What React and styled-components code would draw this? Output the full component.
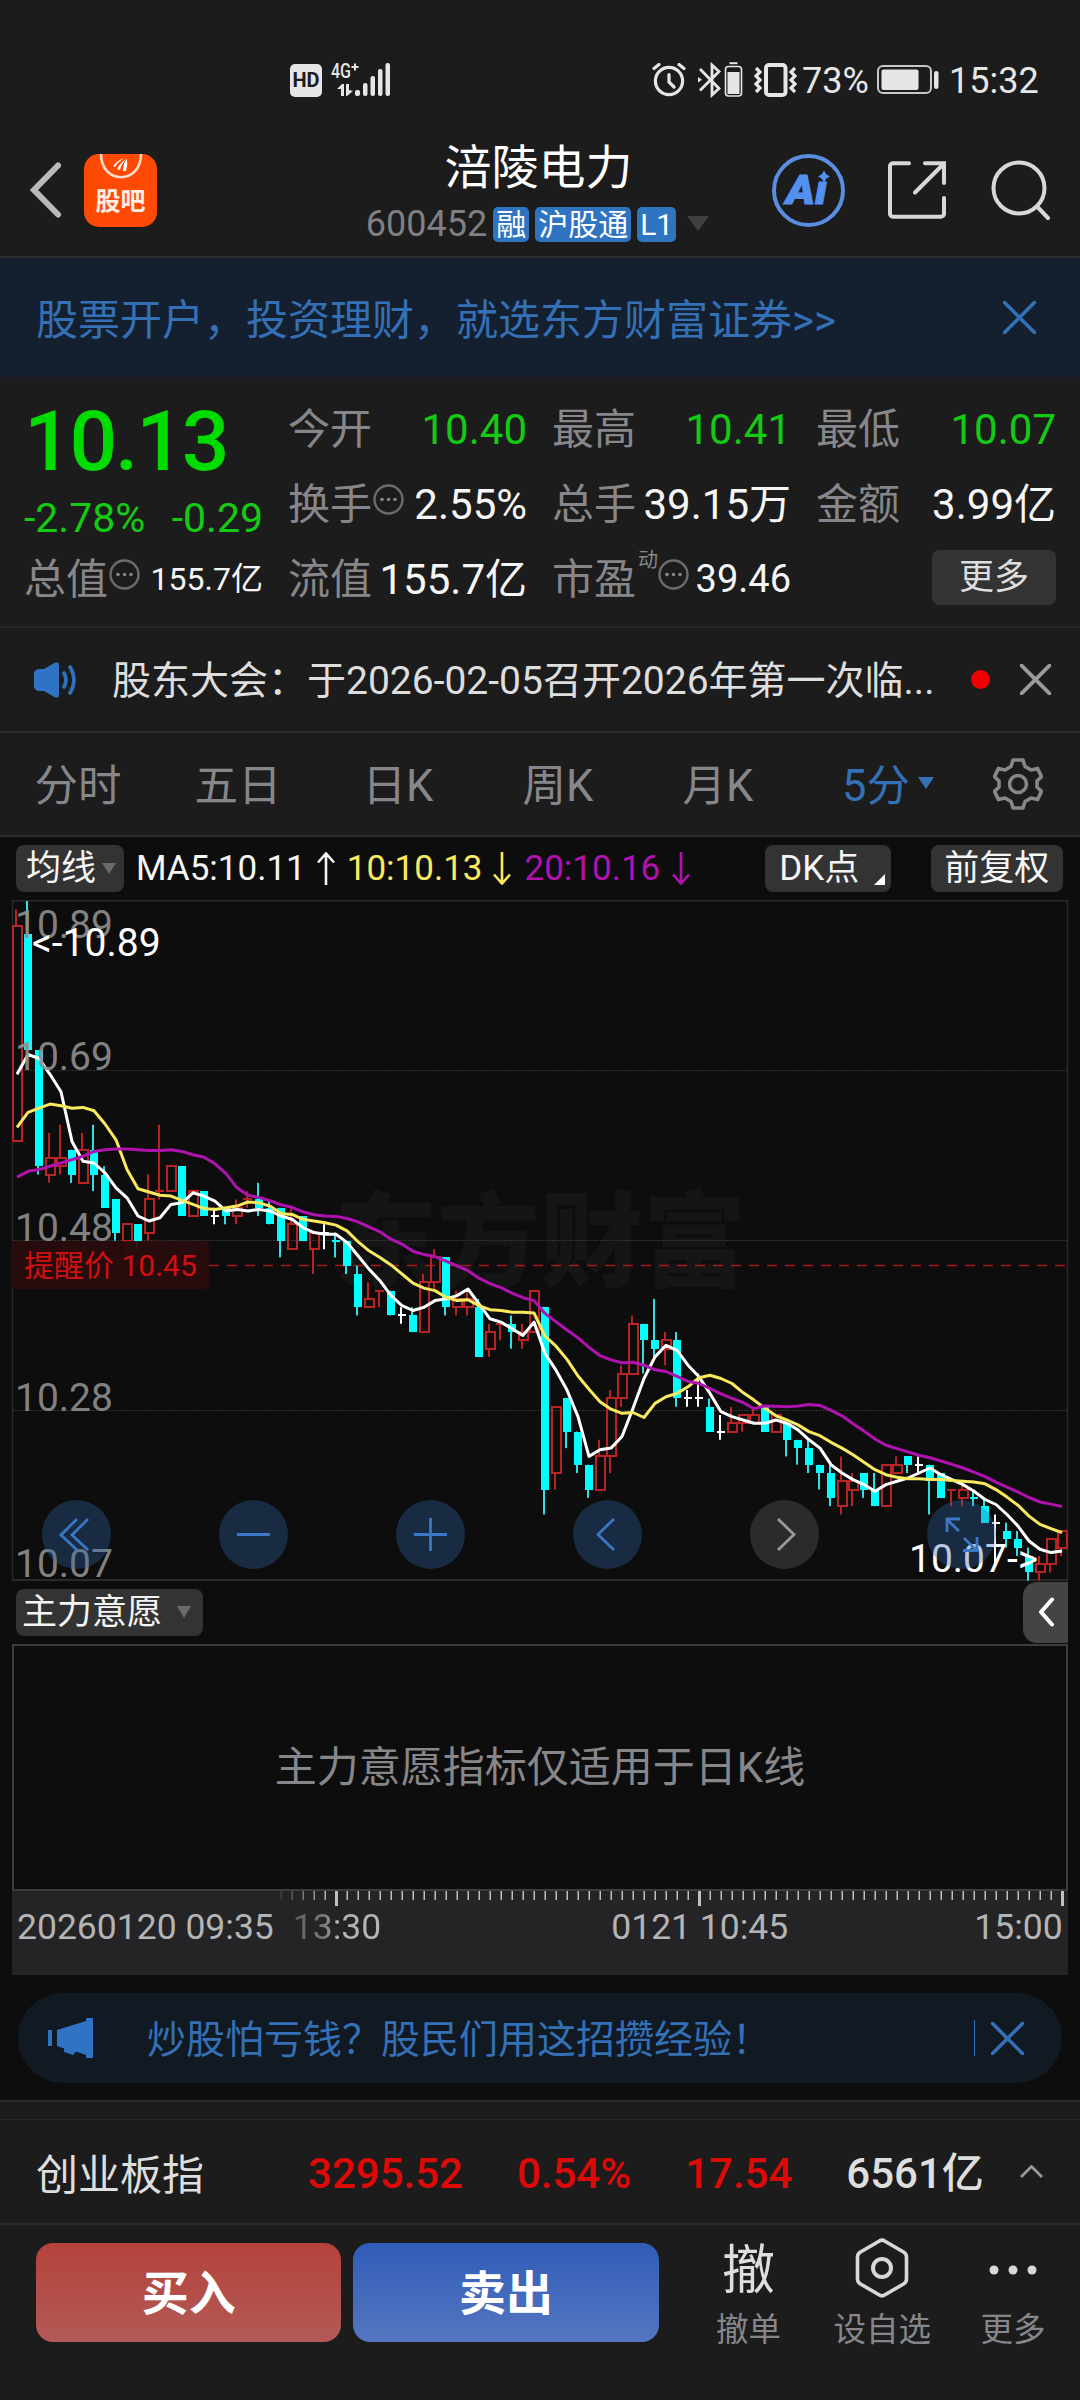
import React from 'react';
import styled, { createGlobalStyle, css } from 'styled-components';

const FONT = "Roboto, 'Noto Sans CJK SC', sans-serif";

const colors = {
  bg: '#1c1c1c',
  chartBg: '#0d0d0d',
  line: '#2c2c2c',
  label: '#87878b',
  text: '#dedede',
  blue: '#3470b6',
  green: '#14cb14',
  red: '#de0a08',
  yellow: '#fbe95e',
  purple: '#b012b0',
  button: '#333333',
};

const GlobalStyle = createGlobalStyle`
  * {
    box-sizing: border-box;
  }

  body {
    margin: 0;
    background: ${colors.bg};
    font-family: ${FONT};
  }

  svg {
    display: block;
    flex: none;
  }
`;

const Screen = styled.div`
  width: 1080px;
  height: 2400px;
  overflow: hidden;
  display: flex;
  flex-direction: column;
  background: ${colors.bg};
  color: ${colors.text};
  white-space: nowrap;

  > * {
    flex: none;
  }
`;

/* ---------- status bar ---------- */

const StatusBar = styled.div`
  height: 120px;
  padding: 63px 43px 0 290px;
  display: flex;
  justify-content: space-between;
  align-items: flex-start;
`;

const StatusGroup = styled.div`
  display: flex;
  align-items: center;
  height: 34px;
`;

const StatusText = styled.span`
  font-size: 36px;
  line-height: 34px;
  color: #e6e6e6;
  width: ${props => props.width}px;
  margin-top: 2px;
`;

const HdBadge = styled.span`
  width: 32px;
  height: 33px;
  margin-right: 9px;
  border-radius: 5px;
  background: #e6e6e6;
  color: ${colors.bg};
  font: 700 20px/32px ${FONT};
  text-align: center;
`;

/* ---------- header ---------- */

const Header = styled.header`
  height: 138px;
  padding: 0 29px 0 29px;
  display: grid;
  grid-template-columns: 1fr auto 1fr;
  border-bottom: 2px solid ${colors.line};
`;

const HeaderSide = styled.div`
  height: 140px;
  display: flex;
  align-items: center;
  justify-content: ${props => (props.end ? 'flex-end' : 'flex-start')};
`;

const ForumLogo = styled.div`
  width: 73px;
  height: 73px;
  margin-left: 22px;
  border-radius: 15px;
  overflow: hidden;
  background: #ff4a05;
  color: #fff0e6;
  text-align: center;
  font: 700 25px/29px ${FONT};
`;

const TitleBlock = styled.div`
  padding-top: 19px;
  display: flex;
  flex-direction: column;
  align-items: center;
  gap: 9px;
`;

const StockName = styled.div`
  margin-right: 3px;
  font-size: 47px;
  line-height: 58px;
  color: #fff;
`;

const CodeRow = styled.div`
  display: flex;
  align-items: center;
  gap: 6px;
  height: 36px;
`;

const StockCode = styled.span`
  font-size: 36px;
  line-height: 36px;
  color: #808084;
`;

const Badge = styled.span`
  height: 35px;
  padding: 0 3px;
  border-radius: 5px;
  background: #2f74c0;
  color: #fff;
  font-size: 30px;
  line-height: 36px;
`;

const Triangle = styled.i`
  width: 0;
  height: 0;
  border-left: ${props => props.size}px solid transparent;
  border-right: ${props => props.size}px solid transparent;
  border-top: ${props => props.depth}px solid ${props => props.color};
`;

const AiBadge = styled.div`
  margin-right: 43px;
`;

/* ---------- banner ---------- */

const Banner = styled.div`
  height: 119px;
  padding: 0 44px 0 36px;
  display: flex;
  align-items: center;
  justify-content: space-between;
  background: #14202f;
  color: ${colors.blue};
  font-size: 42px;
`;

const BannerText = styled.span`
  padding-bottom: 3px;
`;

/* ---------- quote ---------- */

const Quote = styled.section`
  height: 251px;
  padding: 15px 24px 0 24px;
  display: grid;
  grid-template-columns: 239px 239px 239px 240px;
  grid-template-rows: 75px 75px 75px;
  column-gap: 25px;
  border-bottom: 2px solid #262626;
`;

const PriceBlock = styled.div`
  grid-row: span 2;
  display: flex;
  flex-direction: column;
`;

const Price = styled.div`
  font-size: 84px;
  font-weight: 500;
  letter-spacing: -2.2px;
  line-height: 100px;
  color: #00dc00;
`;

const Change = styled.div`
  display: flex;
  justify-content: space-between;
  font-size: 41px;
  line-height: 52px;
  color: ${colors.green};
`;

const Cell = styled.div`
  display: flex;
  align-items: center;
  line-height: 75px;
`;

const CellLabel = styled.span`
  font-size: 42px;
  color: ${colors.label};
`;

const CellValue = styled.span`
  margin-left: auto;
  font-size: ${props => props.size || 42}px;
  color: ${props => (props.green ? colors.green : '#f6f6f6')};
`;

const DynamicMark = styled.sup`
  align-self: flex-start;
  width: 22px;
  margin-left: 2px;
  font-size: 20px;
  line-height: 20px;
  padding-top: 8px;
  color: ${colors.label};
`;

const MoreButton = styled.button`
  margin: -5px 0 0 auto;
  width: 124px;
  height: 55px;
  border: 0;
  border-radius: 7px;
  background: ${colors.button};
  color: ${colors.text};
  font: 35px/55px ${FONT};
  padding: 0;
`;

/* ---------- news ---------- */

const News = styled.div`
  height: 105px;
  padding: 0 29px 0 34px;
  display: flex;
  align-items: center;
  border-bottom: 2px solid ${colors.line};
`;

const NewsText = styled.span`
  margin-left: 32px;
  padding-bottom: 5px;
  font-size: 39px;
  flex: 1;
`;

const Dot = styled.i`
  width: 19px;
  height: 19px;
  margin-right: 30px;
  border-radius: 50%;
  background: #f00000;
`;

/* ---------- period tabs ---------- */

const Tabs = styled.nav`
  height: 104px;
  display: flex;
  align-items: center;
  padding-right: 37px;
  border-bottom: 2px solid ${colors.line};
`;

const Tab = styled.div`
  width: 160px;
  padding: 0 4px 3px 0;
  text-align: center;
  font-size: 43.5px;
  color: ${colors.label};

  ${props => props.active && css`
    display: flex;
    align-items: center;
    gap: 8px;
    width: auto;
    margin-left: 42px;
    margin-right: auto;
    color: ${colors.blue};
  `}
`;

/* ---------- chart ---------- */

const ChartArea = styled.section`
  height: 1263px;
  background: ${colors.chartBg};
`;

const MaRow = styled.div`
  height: 63px;
  padding: 0 16px;
  display: flex;
  align-items: center;
  font-size: 35px;
`;

const ChipButton = styled.button`
  position: relative;
  flex: none;
  width: ${props => props.width}px;
  height: 47px;
  margin-left: ${props => props.left || 0}px;
  padding: 0 0 0 ${props => props.pad}px;
  display: flex;
  align-items: center;
  gap: ${props => props.gap || 0}px;
  border: 0;
  border-radius: 8px;
  background: ${colors.button};
  color: #f5f5f5;
  font: 35px/47px ${FONT};
`;

const CornerMark = styled.i`
  position: absolute;
  right: 6px;
  bottom: 7px;
  border-left: 11px solid transparent;
  border-bottom: 11px solid #fff;
`;

const MaValue = styled.span`
  display: flex;
  align-items: center;
  gap: ${props => props.gap || 10}px;
  margin-left: ${props => props.left}px;
  color: ${props => props.color};
`;

const ChartBox = styled.div`
  position: relative;
  height: 681px;
`;

const ChartButtons = styled.div`
  position: absolute;
  left: 42px;
  top: 600px;
  display: flex;
  gap: 108px;
`;

const RoundButton = styled.button`
  width: 69px;
  height: 69px;
  padding: 0;
  border: 0;
  border-radius: 50%;
  background: ${props => (props.muted ? 'rgba(104, 104, 104, 0.34)' : 'rgba(46, 102, 170, 0.34)')};
`;

const IndicatorRow = styled.div`
  height: 63px;
  padding: 0 12px 1px 16px;
  display: flex;
  align-items: center;
  justify-content: space-between;
`;

const CollapseTab = styled.div`
  width: 45px;
  height: 61px;
  border-radius: 14px 0 0 14px;
  background: #444;
  display: flex;
  align-items: center;
  justify-content: center;
`;

const IndicatorPanel = styled.div`
  height: 247px;
  margin: 0 12px;
  border: 2px solid #3c3c3c;
  text-align: center;
  font-size: 42px;
  line-height: 243px;
  color: ${colors.label};
`;

const Axis = styled.div`
  height: 84px;
  margin: 0 12px;
  background: #242426;
`;

const AxisLabels = styled.div`
  display: flex;
  padding: 0 6px 0 5px;
  font-size: 35.5px;
  line-height: 42px;
  color: #b4b4b4;
`;

const AxisLabel = styled.span`
  margin-left: ${props => props.left || 0}px;
`;

const FadedLabel = styled(AxisLabel)`
  color: transparent;
  background: linear-gradient(90deg, #5c5c5e 0, #7c7c7e 32px, #b4b4b4 46px);
  -webkit-background-clip: text;
  background-clip: text;
`;

const Promo = styled.div`
  height: 90px;
  margin: 18px 18px 0;
  padding: 0 38px 0 30px;
  display: flex;
  align-items: center;
  border-radius: 45px;
  background: #111922;
  color: ${colors.blue};
  font-size: 39px;
`;

const PromoText = styled.span`
  margin-left: 54px;
  padding-bottom: 4px;
  flex: 1;
`;

const PromoDivider = styled.i`
  width: 1px;
  height: 36px;
  margin-right: 16px;
  background: ${colors.blue};
`;

/* ---------- bottom ---------- */

const Strip = styled.div`
  height: 20px;
  border-top: 2px solid ${colors.line};
  border-bottom: 1px solid #262626;
`;

const IndexRow = styled.div`
  height: 105px;
  padding: 0 37px 0 36px;
  display: flex;
  align-items: center;
  border-bottom: 2px solid ${colors.line};
  font-size: 42px;
`;

const IndexValue = styled.span`
  margin-left: ${props => props.left}px;
  padding-top: 5px;
  font-weight: 500;
  line-height: 60px;
  color: ${props => (props.up ? colors.red : colors.text)};
`;

const TradeBar = styled.footer`
  height: 176px;
  padding: 18px 34px 0 36px;
  display: flex;
`;

const TradeButton = styled.button`
  width: 306px;
  height: 99px;
  margin-right: 12px;
  padding: 0;
  border: 0;
  border-radius: 17px;
  color: #fff;
  font: 700 47px/102px ${FONT};
  background: ${props => (props.sell
    ? 'linear-gradient(#2f5cb8, #5576c0)'
    : 'linear-gradient(#b5423b, #b25a56)')};
`;

const Action = styled.div`
  width: ${props => props.width}px;
  margin-left: ${props => props.left}px;
  display: flex;
  flex-direction: column;
  align-items: center;
  font-size: 32.5px;
  line-height: 40px;
  color: ${colors.label};
`;

const ActionIcon = styled.div`
  height: 68px;
  margin-top: -6px;
  margin-bottom: 5px;
  padding-bottom: ${props => props.lift || 0}px;
  display: flex;
  align-items: center;
  font-size: 53px;
  line-height: 68px;
  color: ${colors.text};
`;

/* ---------- icons ---------- */

const CloseIcon = ({ size = 32, color = colors.blue, stroke = 3.5 }) => (
  <svg width={size} height={size} viewBox="0 0 32 32" fill="none" stroke={color} strokeWidth={stroke}>
    <path d="M1 1 31 31M31 1 1 31" strokeLinecap="round" />
  </svg>
);

const InfoDots = ({ left = 0 }) => (
  <svg width="31" height="31" viewBox="0 0 31 31" style={{ marginLeft: left, marginTop: -10 }}>
    <circle cx="15.5" cy="15.5" r="14" fill="none" stroke="#6c6c70" strokeWidth="2.4" />
    <circle cx="9" cy="15.5" r="1.8" fill="#87878b" />
    <circle cx="15.5" cy="15.5" r="1.8" fill="#87878b" />
    <circle cx="22" cy="15.5" r="1.8" fill="#87878b" />
  </svg>
);

const SignalIcon = () => (
  <svg width="60" height="34" viewBox="0 0 60 34" fill="#e6e6e6" overflow="visible">
    <text x="0" y="14.5" fontFamily="Roboto" fontWeight="500" fontSize="20" textLength="20" lengthAdjust="spacingAndGlyphs">4G</text>
    <path d="M20.500 3h2.500v-2.500h2v2.500h2.500v2H25v2.500h-2V5h-2.500z" />
    <path d="M6 26 11 21h2v12h-3v-7zM15 21h3v6l4 1-6 5h-1z" />
    <rect x="24" y="27" width="5" height="6" rx="2" />
    <rect x="32" y="20" width="4.5" height="13" rx="2" />
    <rect x="39.5" y="13" width="4.5" height="20" rx="2" />
    <rect x="47" y="6" width="4.5" height="27" rx="2" />
    <rect x="54.5" y="0" width="4.5" height="33" rx="2" />
  </svg>
);

const AlarmIcon = () => (
  <svg width="34" height="34" viewBox="0 0 34 34" fill="none" stroke="#e6e6e6" strokeWidth="3.2" strokeLinecap="round">
    <circle cx="17" cy="18" r="13.6" />
    <path d="M17 11.5v7.5l5 5M2 5.5 7 1.5M32 5.5 27 1.5" />
  </svg>
);

const BluetoothIcon = () => (
  <svg width="45" height="36" viewBox="0 0 45 36" fill="none" stroke="#e6e6e6" strokeWidth="2.8">
    <path d="M2 7 21 26.5 14 33V3L21 9.5 2 28.5" />
    <path d="M0 15 4 17.8 0 20.6z" fill="#e6e6e6" stroke="none" />
    <rect x="27.5" y="4.5" width="16" height="29.5" rx="3" strokeWidth="1.6" />
    <rect x="29.5" y="10" width="12" height="22" fill="#e6e6e6" stroke="none" />
    <path d="M31.5 1.2h8" strokeWidth="2" />
  </svg>
);

const VibrateIcon = () => (
  <svg width="43" height="34" viewBox="0 0 43 34" fill="none" stroke="#e6e6e6">
    <rect x="12" y="2" width="19.5" height="30" rx="3" strokeWidth="4" />
    <path d="M2 5 6 9 2 13 6 17 2 21 6 25 2 29M41 5 37 9 41 13 37 17 41 21 37 25 41 29" strokeWidth="3.2" />
  </svg>
);

const BatteryIcon = () => (
  <svg width="62" height="30" viewBox="0 0 62 30" fill="none">
    <rect x="1" y="1" width="53" height="27" rx="5" stroke="#c8c8c8" strokeWidth="2" />
    <rect x="4.5" y="4.5" width="37" height="20.5" rx="2" fill="#e6e6e6" />
    <rect x="57" y="6" width="4.5" height="18" rx="2.2" fill="#e6e6e6" />
  </svg>
);

const AiIcon = () => (
  <svg width="73" height="73" viewBox="0 0 73 73">
    <circle cx="36.5" cy="36.5" r="34.5" fill="none" stroke="#5a8ee0" strokeWidth="4" />
    <text x="14" y="50" fill="#5490f0" stroke="#5490f0" strokeWidth="1.200" fontFamily="Roboto" fontWeight="900" fontStyle="italic" fontSize="41" textLength="41" lengthAdjust="spacingAndGlyphs">Aı</text>
    <path d="M52 16.5 54.2 20.3 58 22.5 54.2 24.7 52 28.5 49.8 24.7 46 22.5 49.8 20.3z" fill="#5490f0" />
  </svg>
);

const ShareIcon = () => (
  <svg width="58" height="58" viewBox="0 0 58 58" fill="none" stroke="#d8d8d8" strokeWidth="4" strokeLinecap="round">
    <path d="M21 2.2H5a3 3 0 0 0-3 3v47.6a3 3 0 0 0 3 3h48a3 3 0 0 0 3-3V37M37 2.2H56V22M55 3.5 27 31.5" />
  </svg>
);

const SearchIcon = () => (
  <svg width="60" height="60" viewBox="0 0 60 60" fill="none" stroke="#d8d8d8" strokeWidth="4" strokeLinecap="round">
    <circle cx="28" cy="28" r="25.5" />
    <path d="M46.5 47 57 58" />
  </svg>
);

const SpeakerIcon = () => (
  <svg width="46" height="36" viewBox="0 0 46 36" fill="#2f74c4">
    <path d="M0 12q0-5 6-5h4L20 1.2q5-3 5 3v27.6q0 6-5 3L10 29H6q-6 0-6-5z" />
    <path d="M30 11q4 7 0 14M36 5q8 13 0 26" fill="none" stroke="#2f74c4" strokeWidth="3.6" strokeLinecap="round" />
  </svg>
);

const GearIcon = () => (
  <svg width="50" height="52" viewBox="0 0 50 52" fill="none" stroke={colors.label} strokeWidth="3.6" strokeLinejoin="round">
    <path d="M20 2h10l2 6.5 6 3.4 6.500-1.5 4 8.2-4.500 4.4v6l4.500 4.4-4 8.2-6.500-1.5-6 3.4-2 6.500H20l-2-6.500-6-3.4-6.500 1.5-4-8.2L6 29v-6l-4.500-4.4 4-8.2 6.500 1.5 6-3.4z" />
    <circle cx="25" cy="26" r="8.5" />
  </svg>
);

const ArrowIcon = ({ down }) => (
  <svg width="18" height="33" viewBox="0 0 18 33" fill="none" stroke="currentColor" strokeWidth="2.6">
    <path d={down ? 'M9 0v31M1 22.5 9 31.5 17 22.5' : 'M9 33V2M1 10.5 9 1.5 17 10.5'} />
  </svg>
);

const MegaphoneIcon = () => (
  <svg width="45" height="40" viewBox="0 0 45 40" fill="#2f74c4">
    <rect x="0" y="12" width="4" height="16" />
    <path d="M9 12 38 3V0h7v40h-7v-3l-10-3.5-3 3.5-9-3v-3.5L9 28z" />
  </svg>
);

const HexIcon = () => (
  <svg width="54" height="60" viewBox="0 0 54 60" fill="none" stroke="#d8d8d8" strokeWidth="3.6" strokeLinejoin="round">
    <path d="M24 3.2q3-2 6 0L48.5 14q3 1.8 3 5v22q0 3.2-3 5L30 56.8q-3 2-6 0L5.500 46q-3-1.8-3-5V19q0-3.2 3-5z" />
    <circle cx="27" cy="30" r="9" strokeWidth="4" />
  </svg>
);

const glyphs = {
  rewind: 'M35 19 19 35 35 50M46 19 30 35 46 50',
  minus: 'M18 34.5H51',
  plus: 'M18 34.5H51M34.5 18V51',
  prev: 'M41 19 25 34.5 41 50',
  next: 'M28 19 44 34.5 28 50',
  expand: 'M32 31 20 19.5M33 19H20V32M37 38 49 50M36 50.5H50V37',
};

/* ---------- chart data ---------- */

// Each candle: [kind, high, bodyTop, bodyBottom, low], in cents below 10.89.
// u = closed up, d = closed down, f = flat
const candles = [
  ['u', 1, 3, 29, 29], ['d', 0, 4, 18, 18], ['d', 18, 18, 32, 33], ['u', 28, 31, 33, 34],
  ['u', 27, 31, 32, 33], ['d', 30, 30, 33, 34], ['u', 28, 30, 34, 34], ['d', 27, 30, 33, 35],
  ['d', 32, 33, 37, 37], ['d', 36, 36, 40, 41], ['u', 39, 39, 41, 43], ['d', 39, 39, 41, 42],
  ['u', 33, 36, 40, 41], ['u', 27, 35, 35, 36], ['u', 32, 32, 35, 35], ['d', 32, 32, 38, 38],
  ['u', 35, 35, 38, 38], ['d', 35, 35, 38, 38], ['f', 37, 38, 38, 39], ['d', 37, 37, 38, 39],
  ['u', 36, 37, 38, 39], ['u', 35, 36, 36, 37], ['d', 34, 36, 37, 38], ['d', 36, 37, 39, 39],
  ['d', 37, 37, 41, 43], ['u', 37, 39, 42, 42], ['d', 38, 38, 41, 41], ['u', 40, 40, 42, 45],
  ['f', 39, 40, 40, 42], ['d', 40, 41, 41, 43], ['d', 41, 41, 44, 45], ['d', 44, 45, 49, 50],
  ['u', 46, 48, 49, 49], ['u', 47, 47, 47, 49], ['d', 47, 47, 50, 50], ['f', 49, 50, 50, 51],
  ['d', 49, 50, 52, 52], ['u', 45, 46, 52, 52], ['u', 42, 43, 46, 47], ['d', 43, 43, 49, 50],
  ['u', 47, 48, 49, 50], ['u', 47, 48, 49, 50], ['d', 48, 49, 55, 55], ['u', 51, 52, 54, 55],
  ['u', 51, 51, 51, 53], ['d', 50, 51, 52, 54], ['u', 51, 52, 53, 54], ['u', 47, 47, 52, 52],
  ['d', 49, 49, 71, 74], ['u', 61, 61, 69, 71], ['d', 60, 60, 64, 66], ['d', 64, 64, 68, 69],
  ['d', 68, 68, 71, 72], ['u', 65, 67, 71, 71], ['u', 59, 60, 67, 69], ['u', 56, 57, 60, 61],
  ['u', 50, 51, 57, 57], ['d', 51, 51, 53, 57], ['d', 48, 53, 54, 55], ['u', 52, 53, 54, 56],
  ['d', 52, 53, 60, 61], ['f', 59, 60, 60, 61], ['f', 57, 60, 60, 61], ['d', 60, 61, 64, 64],
  ['f', 62, 64, 64, 65], ['u', 61, 63, 64, 64], ['u', 62, 62, 63, 64], ['u', 61, 62, 63, 63],
  ['d', 61, 61, 64, 64], ['u', 62, 62, 64, 64], ['d', 63, 63, 65, 67], ['d', 65, 65, 66, 68],
  ['d', 65, 66, 68, 69], ['d', 68, 68, 69, 71], ['d', 68, 69, 72, 73], ['u', 67, 70, 73, 74],
  ['u', 69, 70, 71, 73], ['d', 69, 69, 71, 72], ['d', 69, 71, 73, 73], ['u', 68, 68, 73, 73],
  ['u', 67, 68, 69, 69], ['d', 67, 67, 68, 69], ['f', 67, 68, 68, 69], ['d', 68, 68, 70, 74],
  ['d', 69, 69, 72, 72], ['u', 71, 71, 71, 73], ['u', 70, 71, 72, 73], ['d', 71, 72, 72, 73],
  ['d', 72, 73, 75, 75], ['f', 74, 75, 75, 80], ['d', 75, 76, 77, 78], ['d', 76, 77, 78, 79],
  ['d', 78, 79, 81, 82], ['u', 79, 80, 81, 82], ['u', 77, 77, 80, 81], ['u', 76, 76, 78, 79],
];

// Averages for the first bars, whose history is off screen
const seeds = {
  5: [20.9, 18.5, 19, 20.9],
  10: [27.3, 25.5, 25, 24.5, 24.7, 25, 24.9, 25.3, 26.9],
  20: [33.3, 32.6, 32.4, 32, 31.6, 31.2, 30.8, 30.2, 30, 29.9, 29.9, 30, 30.1, 30.1, 30, 30.2, 30.6, 30.9, 31.7],
};

const STEP = 11;
const CENT = 8.29;
const barX = i => 16 + i * STEP;
const priceY = cents => 1 + cents * CENT;

const closes = candles.map(([kind, , top, bottom]) => (kind === 'd' ? bottom : top));

const averagePoints = period =>
  closes
    .map((_, i) => {
      const value = i < period - 1
        ? seeds[period][i]
        : closes.slice(i - period + 1, i + 1).reduce((a, b) => a + b, 0) / period;
      return `${barX(i) + 1},${priceY(value).toFixed(1)}`;
    })
    .join(' ');

const Candle = ({ index, data }) => {
  const [kind, high, top, bottom, low] = data;
  const x = barX(index);
  const yTop = Math.round(priceY(top));
  const yBottom = Math.round(priceY(bottom));
  const yHigh = priceY(high);
  const yLow = priceY(low);

  if (kind === 'u') {
    return (
      <g fill="none" stroke="#b82424" strokeWidth="2">
        {high < top && <path d={`M${x} ${yHigh}V${yTop}`} />}
        {low > bottom && <path d={`M${x} ${yBottom}V${yLow}`} />}
        {top === bottom
          ? <path d={`M${x - 4} ${yTop}h9`} />
          : <rect x={x - 3} y={yTop} width="9" height={yBottom - yTop} />}
      </g>
    );
  }
  if (kind === 'f') {
    return <path d={`M${x} ${yHigh}V${yLow}M${x - 3} ${yTop}h8`} stroke="#fff" strokeWidth="2" />;
  }
  return (
    <g fill="#00ffff">
      <rect x={x - 1} y={yHigh} width="2" height={yLow - yHigh} fill="#2fdfe4" />
      <rect x={x - 3} y={yTop - (top === bottom ? 1 : 0)} width="8" height={Math.max(yBottom - yTop, 2)} />
    </g>
  );
};

const priceLabels = [
  ['10.89', 38], ['10.69', 170], ['10.48', 341], ['10.28', 511], ['10.07', 677],
];

const CandleChart = () => (
  <svg width="1080" height="681" viewBox="0 0 1080 681" fontFamily={FONT}>
    <text x="334" y="379" fontSize="103" fontWeight="900" fill="#151515">东方财富</text>
    <path d="M12 .5H1068M12 680H1068" stroke="#2a2a2a" strokeWidth="2" />
    <path d="M12.5 0V680M1067.5 0V680" stroke="#2a2a2a" strokeWidth="1.5" />
    {[170, 340, 510].map(y => (
      <path key={y} d={`M12 ${y + 0.5}H1068`} stroke="#333" strokeWidth="1" strokeDasharray="2 1" />
    ))}
    <path d="M209 365.5H1067" stroke="#a81a1a" strokeWidth="1.5" strokeDasharray="10 8" />
    {candles.map((data, i) => <Candle key={i} index={i} data={data} />)}
    <g fill="none" strokeWidth="3" strokeLinejoin="round">
      <polyline points={averagePoints(5)} stroke="#fff" />
      <polyline points={averagePoints(10)} stroke={colors.yellow} />
      <polyline points={averagePoints(20)} stroke={colors.purple} />
    </g>
    <path d="M12 341H205q4 0 4 4V385q0 4-4 4H12z" fill="#2a0b0c" fillOpacity=".92" />
    <text x="24" y="376" fontSize="30" fill="#d01010">提醒价 10.45</text>
    <g fontSize="39" fill="#8e8e8e" fillOpacity=".93">
      {priceLabels.map(([label, y]) => <text key={label} x="15" y={y}>{label}</text>)}
    </g>
    <g fontSize="39" fill="#fff">
      <text x="32" y="56">&lt;-10.89</text>
      <text x="909" y="672">10.07-&gt;</text>
    </g>
  </svg>
);

const AxisTicks = () => (
  <svg width="1056" height="15" viewBox="12 0 1056 15">
    {candles.map((_, i) => {
      if (i < 24) return null;
      const major = i === 29 || i === 62 || i === 95;
      return (
        <rect
          key={i}
          x={barX(i) + (major ? 0 : 0.5)}
          y="0"
          width={major ? 3 : 1.5}
          height={major ? 15 : 9}
          fill="#c0c0c0"
          fillOpacity={Math.min(1, (i - 23) * 0.18)}
        />
      );
    })}
  </svg>
);

const RoundGlyphButton = ({ name, muted }) => (
  <RoundButton muted={muted ? 1 : undefined} aria-label={name}>
    <svg width="69" height="69" viewBox="0 0 69 69" fill="none" stroke={muted ? '#98989c' : '#3a78c4'} strokeWidth="2.8">
      <path d={glyphs[name]} />
    </svg>
  </RoundButton>
);

const App = () => (
  <>
    <GlobalStyle />
    <Screen>
      <StatusBar>
        <StatusGroup>
          <HdBadge>HD</HdBadge>
          <SignalIcon />
        </StatusGroup>
        <StatusGroup>
          <AlarmIcon />
          <svg width="12" height="1" />
          <BluetoothIcon />
          <svg width="11" height="1" />
          <VibrateIcon />
          <svg width="5" height="1" />
          <StatusText width={75}>73%</StatusText>
          <BatteryIcon />
          <svg width="10" height="1" />
          <StatusText width={88}>15:32</StatusText>
        </StatusGroup>
      </StatusBar>

      <Header>
        <HeaderSide>
          <svg width="33" height="56" viewBox="0 0 33 56" fill="none" stroke="#bababa" strokeWidth="6">
            <path d="M29 3.5 5 28 29 52.5" strokeLinecap="round" />
          </svg>
          <ForumLogo>
            <svg width="73" height="33" viewBox="0 0 73 33" fill="none">
              <path d="M17 0C17 31 57 31 57 0" stroke="#ffdccb" strokeWidth="2.6" />
              <path d="M29 12q5-6 11-8-7 5-9 9zM33 15q4-7 9-10-5 6-6 11zM39 17q0-8 4-12 1 6-1 12z" fill="#fff" />
            </svg>
            股吧
          </ForumLogo>
        </HeaderSide>
        <TitleBlock>
          <StockName>涪陵电力</StockName>
          <CodeRow>
            <StockCode>600452</StockCode>
            <Badge>融</Badge>
            <Badge>沪股通</Badge>
            <Badge>L1</Badge>
            <svg width="32" height="16" viewBox="-5 0 32 16"><path d="M0 0H22L11 15z" fill="#404040" /></svg>
          </CodeRow>
        </TitleBlock>
        <HeaderSide end="true">
          <AiBadge><AiIcon /></AiBadge>
          <ShareIcon />
          <svg width="45" height="1" />
          <SearchIcon />
        </HeaderSide>
      </Header>

      <Banner>
        <BannerText>股票开户，投资理财，就选东方财富证券&gt;&gt;</BannerText>
        <CloseIcon size={33} />
      </Banner>

      <Quote>
        <PriceBlock>
          <Price>10.13</Price>
          <Change>
            <span>-2.78%</span>
            <span>-0.29</span>
          </Change>
        </PriceBlock>
        <Cell><CellLabel>今开</CellLabel><CellValue green="true">10.40</CellValue></Cell>
        <Cell><CellLabel>最高</CellLabel><CellValue green="true">10.41</CellValue></Cell>
        <Cell><CellLabel>最低</CellLabel><CellValue green="true">10.07</CellValue></Cell>
        <Cell><CellLabel>换手</CellLabel><InfoDots left={1} /><CellValue>2.55%</CellValue></Cell>
        <Cell><CellLabel>总手</CellLabel><CellValue>39.15万</CellValue></Cell>
        <Cell><CellLabel>金额</CellLabel><CellValue>3.99亿</CellValue></Cell>
        <Cell><CellLabel>总值</CellLabel><InfoDots left={1} /><CellValue size={32}>155.7亿</CellValue></Cell>
        <Cell><CellLabel>流值</CellLabel><CellValue>155.7亿</CellValue></Cell>
        <Cell>
          <CellLabel>市盈</CellLabel>
          <DynamicMark>动</DynamicMark>
          <InfoDots left={-2} />
          <CellValue size={38}>39.46</CellValue>
        </Cell>
        <Cell><MoreButton>更多</MoreButton></Cell>
      </Quote>

      <News>
        <SpeakerIcon />
        <NewsText>股东大会：于2026-02-05召开2026年第一次临...</NewsText>
        <Dot />
        <CloseIcon size={31} color="#9a9a9a" stroke={4} />
      </News>

      <Tabs>
        {['分时', '五日', '日K', '周K', '月K'].map(name => <Tab key={name}>{name}</Tab>)}
        <Tab active="true">5分<Triangle size={8} depth={12} color={colors.blue} /></Tab>
        <GearIcon />
      </Tabs>

      <ChartArea>
        <MaRow>
          <ChipButton width={108} pad={10} gap={6}>均线<Triangle size={7} depth={11} color="#6a6a6a" /></ChipButton>
          <MaValue left={12} color="#f5f5f5" gap={11}>MA5:10.11<ArrowIcon /></MaValue>
          <MaValue left={12} color={colors.yellow}>10:10.13<ArrowIcon down /></MaValue>
          <MaValue left={14} color={colors.purple} gap={12}>20:10.16<ArrowIcon down /></MaValue>
          <ChipButton width={126} pad={14} left={75}>DK点<CornerMark /></ChipButton>
          <ChipButton width={132} pad={13} left={40}>前复权</ChipButton>
        </MaRow>
        <ChartBox>
          <CandleChart />
          <ChartButtons>
            <RoundGlyphButton name="rewind" />
            <RoundGlyphButton name="minus" />
            <RoundGlyphButton name="plus" />
            <RoundGlyphButton name="prev" />
            <RoundGlyphButton name="next" muted />
            <RoundGlyphButton name="expand" />
          </ChartButtons>
        </ChartBox>
        <IndicatorRow>
          <ChipButton width={187} pad={6} gap={15}>主力意愿<Triangle size={7.5} depth={12} color="#6a6a6a" /></ChipButton>
          <CollapseTab>
            <svg width="18" height="30" viewBox="0 0 18 30" fill="none" stroke="#fff" strokeWidth="4">
              <path d="M15 2.5 4 15 15 27.5" strokeLinecap="round" strokeLinejoin="round" />
            </svg>
          </CollapseTab>
        </IndicatorRow>
        <IndicatorPanel>主力意愿指标仅适用于日K线</IndicatorPanel>
        <Axis>
          <AxisTicks />
          <AxisLabels>
            <AxisLabel>20260120 09:35</AxisLabel>
            <FadedLabel left={19}>13:30</FadedLabel>
            <AxisLabel left={230}>0121 10:45</AxisLabel>
            <AxisLabel left={186}>15:00</AxisLabel>
          </AxisLabels>
        </Axis>
        <Promo>
          <MegaphoneIcon />
          <PromoText>炒股怕亏钱？股民们用这招攒经验！</PromoText>
          <PromoDivider />
          <CloseIcon size={33} />
        </Promo>
      </ChartArea>

      <Strip />

      <IndexRow>
        <span>创业板指</span>
        <IndexValue left={104} up="true">3295.52</IndexValue>
        <IndexValue left={54} up="true">0.54%</IndexValue>
        <IndexValue left={54} up="true">17.54</IndexValue>
        <IndexValue left={54}>6561亿</IndexValue>
        <svg width="23" height="13" viewBox="0 0 23 13" fill="none" stroke="#9a9a9a" strokeWidth="2.8" style={{ marginLeft: 'auto' }}>
          <path d="M1 12 11.5 1.5 22 12" />
        </svg>
      </IndexRow>

      <TradeBar>
        <TradeButton>买入</TradeButton>
        <TradeButton sell="true">卖出</TradeButton>
        <Action width={68} left={44}>
          <ActionIcon>撤</ActionIcon>
          撤单
        </Action>
        <Action width={100} left={50}>
          <ActionIcon lift={7}><HexIcon /></ActionIcon>
          设自选
        </Action>
        <Action width={66} left={48}>
          <ActionIcon lift={3}>
            <svg width="48" height="12" viewBox="0 0 48 12" fill="#d8d8d8">
              <circle cx="5" cy="6" r="4.5" />
              <circle cx="24" cy="6" r="4.5" />
              <circle cx="43" cy="6" r="4.5" />
            </svg>
          </ActionIcon>
          更多
        </Action>
      </TradeBar>
    </Screen>
  </>
);

export default App;
